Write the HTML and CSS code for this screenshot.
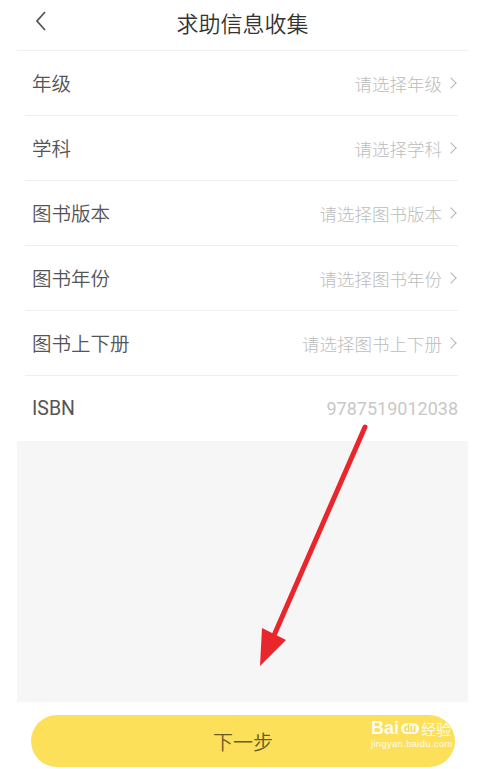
FILE: index.html
```html
<!DOCTYPE html>
<html lang="zh">
<head>
<meta charset="utf-8">
<title>求助信息收集</title>
<link rel="stylesheet" href="styles.css">
</head>
<body>
<div class="page">
  <header class="header">
    <svg class="back" width="14" height="22" viewBox="0 0 14 22"><path d="M11 2 L3 11 L11 20" fill="none" stroke="#555" stroke-width="1.8"/></svg>
    <h1 class="title">求助信息收集</h1>
  </header>
  <div class="list">
    <div class="row"><span class="label">年级</span><span class="value">请选择年级<i class="chev"></i></span></div>
    <div class="row"><span class="label">学科</span><span class="value">请选择学科<i class="chev"></i></span></div>
    <div class="row"><span class="label">图书版本</span><span class="value">请选择图书版本<i class="chev"></i></span></div>
    <div class="row"><span class="label">图书年份</span><span class="value">请选择图书年份<i class="chev"></i></span></div>
    <div class="row"><span class="label">图书上下册</span><span class="value">请选择图书上下册<i class="chev"></i></span></div>
    <div class="row last"><span class="label latin">ISBN</span><span class="value latin num">9787519012038</span></div>
  </div>
  <div class="blank"></div>
  <div class="footer">
    <button class="next">下一步</button>
  </div>
</div>
<svg class="arrow" width="489" height="769" viewBox="0 0 489 769">
  <line x1="365" y1="427" x2="272" y2="640" stroke="#e8262b" stroke-width="5" stroke-linecap="round"/>
  <polygon points="260,666 262,628 286,640" fill="#e8262b"/>
</svg>
<div class="watermark">
  <div class="wm-top"><span class="wm-bai">Bai</span><span class="wm-du">du</span><span class="wm-jy">经验</span></div>
  <div class="wm-url">jingyan.baidu.com</div>
</div>
</body>
</html>
```
FILE: styles.css
```css
html, body {
  margin: 0;
  padding: 0;
  background: #fff;
}
body {
  font-family: "Noto Sans CJK SC", "Noto Sans", sans-serif;
  width: 489px;
  height: 769px;
  overflow: hidden;
  position: relative;
}
.page {
  margin: 0 21px 0 17px;
  display: flex;
  flex-direction: column;
}
.header {
  height: 50px;
  border-bottom: 1px solid #f1f1f1;
  display: flex;
  align-items: center;
  justify-content: center;
  position: relative;
}
.back {
  position: absolute;
  left: 17px;
  top: 10px;
}
.title {
  margin: 0;
  font-size: 22px;
  font-weight: 350;
  color: #333;
  line-height: 1;
  padding-bottom: 6px;
}
.list {
  padding: 0 10px 0 8px;
}
.row {
  height: 64px;
  border-bottom: 1px solid #efefef;
  display: flex;
  align-items: center;
  justify-content: space-between;
  padding-left: 7px;
}
.row.last {
  border-bottom: none;
  height: 65px;
}
.label {
  font-size: 19.5px;
  font-weight: 350;
  color: #555;
  padding-bottom: 1px;
}
.value {
  font-size: 17.5px;
  font-weight: 300;
  color: #bcbcbc;
  display: flex;
  align-items: center;
}
.chev {
  display: inline-block;
  width: 7px;
  height: 7px;
  border-top: 1.3px solid #b5b5b5;
  border-right: 1.3px solid #b5b5b5;
  transform: rotate(45deg);
  margin-left: 5px;
  margin-right: 3px;
}
.latin {
  font-family: Roboto, "Noto Sans", sans-serif;
}
.label.latin {
  font-weight: 400;
}
.num {
  font-size: 18px;
  font-weight: 400;
  color: #c8c8c8;
}
.blank {
  height: 261px;
  background: #f6f6f6;
}
.footer {
  padding: 13px 13px 0 14px;
}
.next {
  width: 100%;
  height: 52px;
  border: none;
  border-radius: 26px;
  background: #fde059;
  color: #665a2a;
  font-family: "Noto Sans CJK SC", sans-serif;
  font-size: 20px;
  font-weight: 350;
  display: flex;
  align-items: center;
  justify-content: center;
  padding: 0;
}
.arrow {
  position: absolute;
  left: 0;
  top: 0;
  pointer-events: none;
}
.watermark {
  position: absolute;
  left: 371px;
  top: 718px;
  white-space: nowrap;
  color: rgba(255, 255, 255, 0.9);
  font-family: "Liberation Sans", sans-serif;
}
.wm-top {
  display: flex;
  align-items: center;
  gap: 1px;
}
.wm-bai {
  font-size: 18px;
  font-weight: bold;
}
.wm-du {
  font-size: 10px;
  font-weight: bold;
  background: rgba(255, 255, 255, 0.85);
  color: #f3d659;
  border-radius: 7px;
  padding: 0 3px;
  margin: 0 1px;
}
.wm-jy {
  font-family: "Noto Sans CJK SC", sans-serif;
  font-size: 15px;
}
.wm-url {
  font-size: 9.5px;
  margin-top: -1px;
  letter-spacing: 0.3px;
}
```
